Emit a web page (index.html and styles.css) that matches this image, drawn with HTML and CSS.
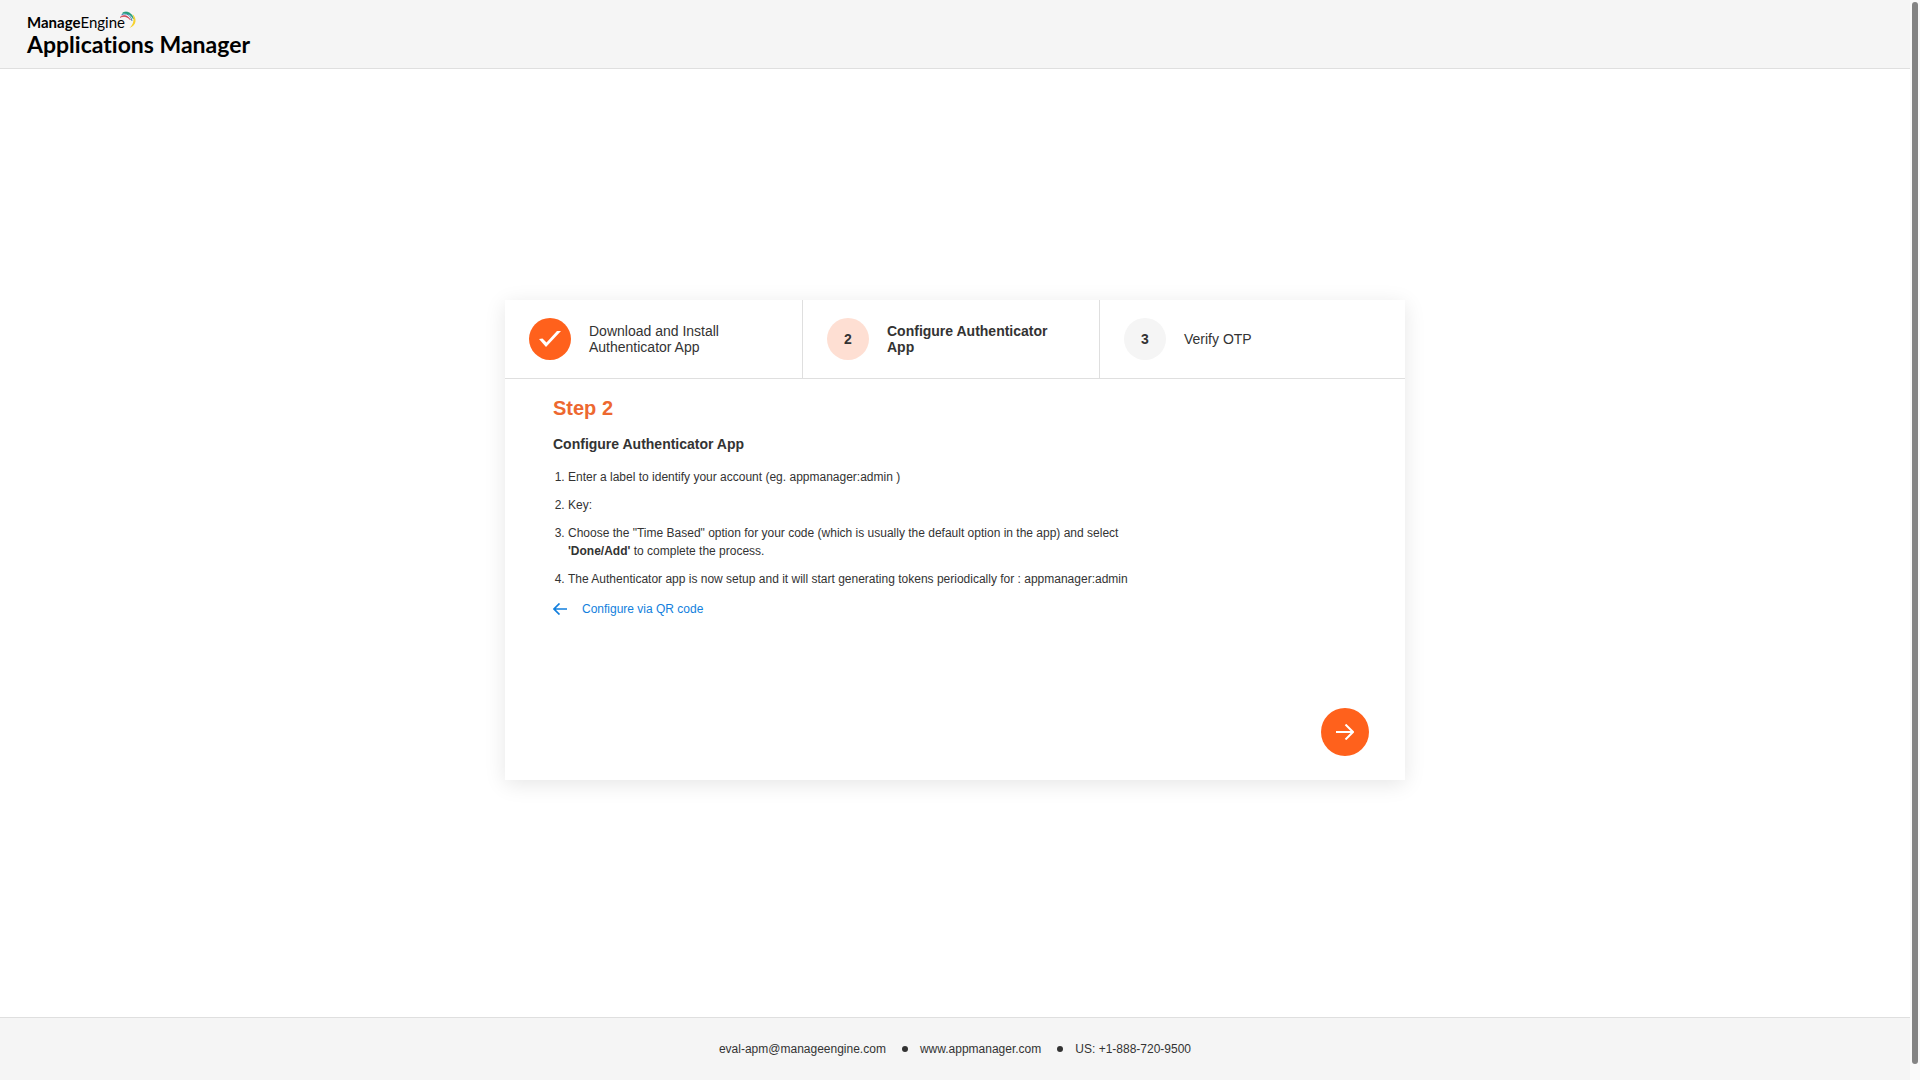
FILE: index.html
```html
<!DOCTYPE html>
<html lang="en">
  <head>
    <meta charset="UTF-8" />
    <meta name="viewport" content="width=device-width, initial-scale=1.0" />
    <title>Applications Manager</title>
    <link rel="stylesheet" href="styles.css">
  </head>
  <body>
    <div class="page">
      <header class="header">
        <div class="logo">
          <div class="brand">
            <span><b>Manage</b>Engine</span>
            <svg class="swoosh" width="18" height="18" viewBox="0 0 18 18" fill="none">
              <path d="M1 6.500 C4 3 9 4 11.500 9 C8.500 5.500 5 4.500 1 6.500Z" fill="#c8384a" stroke="#c8384a" stroke-width="0.500" />
              <path d="M2.500 3.800 C7 1.500 12 4 13 10" stroke="#3f86bd" stroke-width="1" />
              <path d="M3.500 2.200 C7 -0.500 13 1.500 14.500 8 C12.500 4 9 1.800 3.500 2.200Z" fill="#1f9a7a" stroke="#1f9a7a" stroke-width="0.800" />
              <path d="M13.500 3 C18 7 18 14.500 10.500 17 C14.500 13.500 15.500 8.500 13.500 3Z" fill="#f6d22f" />
            </svg>
          </div>
          <div class="product">Applications Manager</div>
        </div>
      </header>

      <main class="main">
        <section class="card">
          <ol class="steps">
            <li class="step">
              <span class="step-num done">
                <svg width="24" height="18" viewBox="0 0 24 18">
                  <path d="M1 9 L4.500 8.500 L8.500 12.500 L19 1 L23 1 L8 17 Z" fill="#fff" />
                </svg>
              </span>
              <span>Download and Install Authenticator App</span>
            </li>
            <li class="step active">
              <span class="step-num">2</span>
              <span>Configure Authenticator App</span>
            </li>
            <li class="step">
              <span class="step-num">3</span>
              <span>Verify OTP</span>
            </li>
          </ol>

          <div class="card-body">
            <h1>Step 2</h1>
            <h2>Configure Authenticator App</h2>
            <ol class="instructions">
              <li>Enter a label to identify your account (eg. appmanager:admin )</li>
              <li>Key:</li>
              <li>Choose the "Time Based" option for your code (which is usually the default option in the app) and select <b>'Done/Add'</b> to complete the process.</li>
              <li>The Authenticator app is now setup and it will start generating tokens periodically for : appmanager:admin</li>
            </ol>
            <a class="qr-link" href="#">
              <svg width="14" height="12" viewBox="0 0 14 12" fill="none" stroke="#127fdd" stroke-width="1.700">
                <path d="M14 6 H1 M6.500 0.500 L1 6 L6.500 11.500" />
              </svg>
              <span>Configure via QR code</span>
            </a>
          </div>

          <div class="card-actions">
            <button class="next" type="button" aria-label="Next">
              <svg width="18" height="16" viewBox="0 0 18 16" fill="none" stroke="#fff" stroke-width="2">
                <path d="M0 8 H17 M9.500 0.500 L17 8 L9.500 15.500" />
              </svg>
            </button>
          </div>
        </section>
      </main>

      <footer class="footer">
        <a href="#">eval-apm@manageengine.com</a>
        <span class="dot"></span>
        <a href="#">www.appmanager.com</a>
        <span class="dot"></span>
        <span>US: +1-888-720-9500</span>
      </footer>
    </div>

    <div class="scroll-track"><div class="scroll-thumb"></div></div>
  </body>
</html>
```
FILE: styles.css
```css
* {
  box-sizing: border-box;
}

body {
  display: flex;
  height: 100vh;
  margin: 0;
  overflow: hidden;
  background: #fff;
  color: #333;
  font-family: "Liberation Sans", Arial, sans-serif;
  font-size: 12px;
}

svg {
  display: block;
  flex: none;
}

.page {
  display: flex;
  flex: 1;
  flex-direction: column;
}

/* header */
.header {
  height: 69px;
  padding: 12px 27px;
  background: #f5f5f5;
  border-bottom: 1px solid #dfdfdf;
}

.logo {
  color: #000;
  font-family: Lato, sans-serif;
  font-variant-ligatures: none;
}

.brand {
  display: flex;
  font-size: 15px;
  line-height: 20px;
}

.swoosh {
  margin: -1px 0 0 -6px;
}

.product {
  font-size: 23px;
  font-weight: 700;
  line-height: 24px;
}

/* wizard card */
.main {
  display: flex;
  flex: 1;
  align-items: center;
  justify-content: center;
  padding-bottom: 6px;
}

.card {
  display: flex;
  flex-direction: column;
  width: 900px;
  min-height: 480px;
  background: #fff;
  box-shadow: 0 4px 20px rgba(0, 0, 0, 0.1);
}

.steps {
  display: flex;
  margin: 0;
  padding: 0;
  border-bottom: 1px solid #dfdfdf;
  list-style: none;
}

.step {
  display: flex;
  align-items: center;
  gap: 18px;
  width: 33%;
  padding: 18px 24px;
  font-size: 14px;
  line-height: 16px;
}

.step + .step {
  border-left: 1px solid #dfdfdf;
}

.step.active {
  font-weight: 700;
}

.step-num {
  display: flex;
  flex: none;
  align-items: center;
  justify-content: center;
  width: 42px;
  height: 42px;
  border-radius: 50%;
  background: #f5f5f5;
  font-weight: 700;
}

.active .step-num {
  background: #fedfd3;
}

.step-num.done {
  background: #ff611c;
}

.card-body {
  flex: 1;
  padding: 17px 48px 0;
}

h1 {
  margin: 0 0 16px;
  color: #ed6830;
  font-size: 20px;
  line-height: 24px;
}

h2 {
  margin: 0 0 16px;
  font-size: 14px;
  line-height: 16px;
}

.instructions {
  max-width: 600px;
  margin: 0;
  padding-left: 15px;
  line-height: 18px;
}

.instructions li {
  margin-bottom: 10px;
}

.qr-link {
  display: inline-flex;
  align-items: center;
  gap: 15px;
  color: #127fdd;
  line-height: 22px;
  text-decoration: none;
}

.card-actions {
  display: flex;
  justify-content: flex-end;
  padding: 0 36px 24px;
}

.next {
  display: flex;
  align-items: center;
  justify-content: center;
  width: 48px;
  height: 48px;
  padding: 0;
  border: none;
  border-radius: 50%;
  background: #ff611c;
  cursor: pointer;
}

/* footer */
.footer {
  display: flex;
  align-items: center;
  justify-content: center;
  height: 63px;
  background: #f5f5f5;
  border-top: 1px solid #dfdfdf;
}

.footer a {
  color: inherit;
  text-decoration: none;
}

.dot {
  width: 6px;
  height: 6px;
  margin: 0 12px 0 16px;
  border-radius: 50%;
  background: #333;
}

/* scrollbar */
.scroll-track {
  width: 10px;
  padding: 2px 2px 16px;
  background: #fafafa;
}

.scroll-thumb {
  height: 100%;
  border-radius: 3px;
  background: #858585;
}
```
